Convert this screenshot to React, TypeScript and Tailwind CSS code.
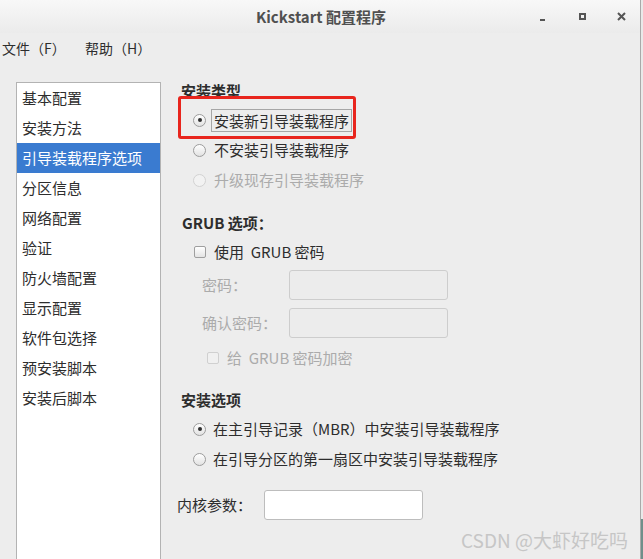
import React from "react";

const FONT = "font-['Noto_Sans_CJK_SC','Noto_Sans',sans-serif]";

function Radio({ checked = false, disabled = false }: { checked?: boolean; disabled?: boolean }) {
  return (
    <span
      className={
        "flex items-center justify-center w-[13px] h-[13px] rounded-full border shrink-0 " +
        (disabled
          ? "border-[#d2d2d2] bg-[#f2f2f2]"
          : "border-[#9c9c9c] bg-gradient-to-b from-[#ffffff] to-[#e2e2e2]")
      }
    >
      {checked && <span className="w-[4px] h-[4px] rounded-full bg-[#2f2f2f]" />}
    </span>
  );
}

function Check({ disabled = false }: { disabled?: boolean }) {
  return (
    <span
      className={
        "block w-[12px] h-[12px] rounded-[2px] border shrink-0 " +
        (disabled
          ? "border-[#d0d0d0] bg-[#f0f0f0]"
          : "border-[#9f9f9f] bg-gradient-to-b from-[#ffffff] to-[#e4e4e4]")
      }
    />
  );
}

const navItems = [
  "基本配置",
  "安装方法",
  "引导装载程序选项",
  "分区信息",
  "网络配置",
  "验证",
  "防火墙配置",
  "显示配置",
  "软件包选择",
  "预安装脚本",
  "安装后脚本",
];

export default function App() {
  return (
    <div className={"w-[643px] h-[559px] overflow-hidden flex bg-[#ededed] text-[#2d2d2d] " + FONT}>
      <div className="w-[640px] flex flex-col shrink-0">
        {/* title bar */}
        <div className="h-[33px] shrink-0 grid grid-cols-[1fr_auto_1fr] items-center bg-gradient-to-b from-[#f8f8f8] to-[#ebebeb]">
          <div />
          <div className="text-[15px] font-semibold text-[#505050] leading-none pl-[2px]">Kickstart 配置程序</div>
          <div className="flex items-center justify-end h-full">
            <div className="w-[40px] h-full flex items-center justify-center">
              <span className="block w-[5px] h-[2px] bg-[#555] mt-[6px]" />
            </div>
            <div className="w-[40px] h-full flex items-center justify-center">
              <span className="block w-[7px] h-[7px] border-[2px] border-[#555]" />
            </div>
            <div className="w-[38px] h-full flex items-center justify-center">
              <svg width="9" height="9" viewBox="0 0 9 9">
                <path d="M1 1 L8 8 M8 1 L1 8" stroke="#555" strokeWidth="2" />
              </svg>
            </div>
          </div>
        </div>
        {/* menu bar */}
        <div className="h-[30px] shrink-0 flex items-center text-[14px] text-[#2d2d2d] pl-[2px]">
          <span className="w-[83px]">文件（F）</span>
          <span>帮助（H）</span>
        </div>
        {/* body */}
        <div className="flex pl-[16px] pt-[19px]">
          {/* left list */}
          <div className="w-[145px] h-[520px] shrink-0 bg-white border border-[#b3b3b3] flex flex-col">
            {navItems.map((t, i) => (
              <div
                key={t}
                className={
                  "h-[30px] flex items-center pl-[5px] text-[15px] " +
                  (i === 2 ? "bg-[#3a7bd0] text-white" : "text-[#2d2d2d]")
                }
              >
                {t}
              </div>
            ))}
          </div>
          {/* right panel */}
          <div className="relative flex-1 flex flex-col text-[15px]">
            <div className="h-[18px] flex items-center pl-[20px] font-bold">安装类型</div>
            <div className="mt-[5px] h-[30px] flex items-center pl-[32px]">
              <Radio checked />
              <span className="ml-[5px] border border-[#a6a6a6] px-[2px] leading-[21px]">安装新引导装载程序</span>
            </div>
            <div className="h-[30px] flex items-center pl-[32px]">
              <Radio />
              <span className="ml-[5px] border border-transparent px-[2px]">不安装引导装载程序</span>
            </div>
            <div className="h-[30px] flex items-center pl-[32px] text-[#ababab]">
              <Radio disabled />
              <span className="ml-[5px] border border-transparent px-[2px]">升级现存引导装载程序</span>
            </div>

            <div className="mt-[18px] h-[20px] flex items-center pl-[21px] font-bold">GRUB 选项：</div>
            <div className="mt-[4px] h-[30px] flex items-center pl-[33px]">
              <Check />
              <span className="ml-[8px]">使用&nbsp; GRUB 密码</span>
            </div>
            <div className="mt-[3px] h-[30px] flex items-center pl-[41px] text-[#ababab]">
              <span className="w-[87px]">密码：</span>
              <div className="w-[159px] h-[30px] rounded-[3px] border border-[#cdcdcd] bg-[#ececec]" />
            </div>
            <div className="mt-[8px] h-[30px] flex items-center pl-[41px] text-[#ababab]">
              <span className="w-[87px]">确认密码：</span>
              <div className="w-[159px] h-[30px] rounded-[3px] border border-[#cdcdcd] bg-[#ececec]" />
            </div>
            <div className="mt-[5px] h-[30px] flex items-center pl-[46px] text-[#ababab]">
              <Check disabled />
              <span className="ml-[8px]">给&nbsp; GRUB 密码加密</span>
            </div>

            <div className="mt-[17px] h-[20px] flex items-center pl-[20px] font-bold">安装选项</div>
            <div className="mt-[4px] h-[30px] flex items-center pl-[32px]">
              <Radio checked />
              <span className="ml-[7px]">在主引导记录（MBR）中安装引导装载程序</span>
            </div>
            <div className="h-[30px] flex items-center pl-[32px]">
              <Radio />
              <span className="ml-[7px]">在引导分区的第一扇区中安装引导装载程序</span>
            </div>
            <div className="mt-[16px] h-[30px] flex items-center pl-[16px]">
              <span className="w-[87px]">内核参数：</span>
              <div className="w-[159px] h-[30px] rounded-[3px] border border-[#bdbdbd] bg-white" />
            </div>
            <div className="mt-[10px] flex justify-end pr-[12px] text-[19px] text-[#c6c6c6] leading-none">
              CSDN @大虾好吃吗
            </div>

            {/* red annotation box */}
            <div className="absolute left-[17px] top-[14px] w-[178px] h-[43px] border-[3px] border-[#e8251d] rounded-[3px]" />
          </div>
        </div>
      </div>
      <div className="w-[1px] bg-[#a9a9a9] shrink-0" />
      <div className="w-[2px] flex flex-col shrink-0">
        <div className="flex-1 bg-[#e9e9e9]" />
        <div className="h-[40px] bg-[#6f8f8a]" />
      </div>
    </div>
  );
}
